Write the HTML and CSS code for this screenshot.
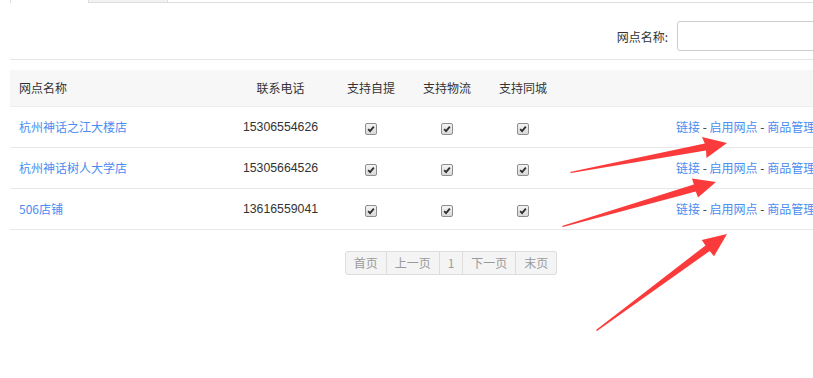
FILE: index.html
```html
<!DOCTYPE html>
<html lang="zh-CN">
<head>
<meta charset="utf-8">
<title>网点管理</title>
<link rel="stylesheet" href="styles.css">
</head>
<body>
<div class="page">
  <div class="tabs">
    <div class="tab tab-active"></div>
    <div class="tab tab-idle"></div>
    <div class="tab-rest"></div>
  </div>
  <div class="search">
    <label class="search-label">网点名称:</label>
    <input class="search-input" type="text">
  </div>
  <div class="grid">
    <div class="row head">
      <div class="cell left">网点名称</div>
      <div class="cell center">联系电话</div>
      <div class="cell center">支持自提</div>
      <div class="cell center">支持物流</div>
      <div class="cell center">支持同城</div>
      <div class="cell"></div>
    </div>
    <div class="row">
      <div class="cell left"><a class="link">杭州神话之江大楼店</a></div>
      <div class="cell center num">15306554626</div>
      <div class="cell center"><span class="cb"><svg viewBox="0 0 12 12"><path d="M2.6 6.2 L4.9 8.6 L9.4 3.2"/></svg></span></div>
      <div class="cell center"><span class="cb"><svg viewBox="0 0 12 12"><path d="M2.6 6.2 L4.9 8.6 L9.4 3.2"/></svg></span></div>
      <div class="cell center"><span class="cb"><svg viewBox="0 0 12 12"><path d="M2.6 6.2 L4.9 8.6 L9.4 3.2"/></svg></span></div>
      <div class="cell actions"><a class="link">链接</a> - <a class="link">启用网点</a> - <a class="link">商品管理</a></div>
    </div>
    <div class="row">
      <div class="cell left"><a class="link">杭州神话树人大学店</a></div>
      <div class="cell center num">15305664526</div>
      <div class="cell center"><span class="cb"><svg viewBox="0 0 12 12"><path d="M2.6 6.2 L4.9 8.6 L9.4 3.2"/></svg></span></div>
      <div class="cell center"><span class="cb"><svg viewBox="0 0 12 12"><path d="M2.6 6.2 L4.9 8.6 L9.4 3.2"/></svg></span></div>
      <div class="cell center"><span class="cb"><svg viewBox="0 0 12 12"><path d="M2.6 6.2 L4.9 8.6 L9.4 3.2"/></svg></span></div>
      <div class="cell actions"><a class="link">链接</a> - <a class="link">启用网点</a> - <a class="link">商品管理</a></div>
    </div>
    <div class="row">
      <div class="cell left"><a class="link">506店铺</a></div>
      <div class="cell center num">13616559041</div>
      <div class="cell center"><span class="cb"><svg viewBox="0 0 12 12"><path d="M2.6 6.2 L4.9 8.6 L9.4 3.2"/></svg></span></div>
      <div class="cell center"><span class="cb"><svg viewBox="0 0 12 12"><path d="M2.6 6.2 L4.9 8.6 L9.4 3.2"/></svg></span></div>
      <div class="cell center"><span class="cb"><svg viewBox="0 0 12 12"><path d="M2.6 6.2 L4.9 8.6 L9.4 3.2"/></svg></span></div>
      <div class="cell actions"><a class="link">链接</a> - <a class="link">启用网点</a> - <a class="link">商品管理</a></div>
    </div>
  </div>
  <div class="pager">
    <span class="pg first">首页</span><span class="pg">上一页</span><span class="pg">1</span><span class="pg">下一页</span><span class="pg last">末页</span>
  </div>
</div>
<svg class="arrows" width="813" height="378" viewBox="0 0 813 378">
  <polygon points="570,172 704.8,143.6 702,137 727,143 706.5,158 706,150.4 571,173"/>
  <polygon points="562,226 693.8,184.6 692,178.4 716,182 698,197.6 695.8,191.4 563,227"/>
  <polygon points="596,330 705.5,245.4 701.7,240.1 727,234 714,256.3 709.7,251 597,331"/>
</svg>
</body>
</html>
```
FILE: styles.css
```css
html, body {
  margin: 0;
  padding: 0;
  overflow: hidden;
  background: #fff;
}
body {
  position: relative;
  width: 813px;
  height: 378px;
  font-family: "Liberation Sans", "Noto Sans CJK SC", sans-serif;
  font-size: 12px;
  color: #333;
}
.page {
  width: 882px;
  margin-left: 10px;
}
.tabs {
  display: flex;
  height: 40px;
  margin-top: -37px;
}
.tab {
  width: 79px;
  box-sizing: border-box;
  border: 1px solid #ddd;
}
.tab-active {
  border-bottom: none;
  background: #fff;
}
.tab-idle {
  border-left: none;
  background: #f2f2f2;
}
.tab-rest {
  flex: 1;
  border-bottom: 1px solid #ddd;
}
.search {
  display: flex;
  justify-content: flex-end;
  align-items: center;
  padding: 18px 0 8px;
  border-bottom: 1px solid #e5e5e5;
}
.search-label {
  margin-right: 9px;
  font-family: "Noto Sans CJK SC", sans-serif;
}
.search-input {
  width: 215px;
  height: 30px;
  box-sizing: border-box;
  border: 1px solid #ccc;
  border-radius: 3px;
  margin: 0;
  padding: 0 6px;
}
.grid {
  margin-top: 10px;
}
.row {
  display: grid;
  grid-template-columns: 218px 105px 76px 76px 76px 1fr;
  height: 40px;
  border-bottom: 1px solid #e8e8e8;
  align-items: center;
}
.row.head {
  height: 36px;
  background: #f7f7f7;
  border-bottom: 1px solid #ededed;
}
.cell {
  white-space: nowrap;
  font-family: "Noto Sans CJK SC", sans-serif;
  line-height: 16px;
}
.left {
  padding-left: 9px;
}
.center {
  text-align: center;
}
.num {
  font-family: "Liberation Sans", "Noto Sans CJK SC", sans-serif;
  font-size: 12.3px;
}
.actions {
  padding-left: 115px;
}
.link {
  color: #4a8cf0;
  text-decoration: none;
}
.cb {
  display: inline-block;
  width: 12px;
  height: 12px;
  box-sizing: border-box;
  border: 1px solid #8e8e8e;
  border-radius: 2px;
  background: linear-gradient(#f4f4f4, #d9d9d9);
  vertical-align: middle;
  position: relative;
}
.cb svg {
  display: block;
  width: 10px;
  height: 10px;
}
.cb path {
  fill: none;
  stroke: #2e2e2e;
  stroke-width: 2.2;
}
.pager {
  display: flex;
  justify-content: center;
  margin-top: 21px;
}
.pg {
  height: 24px;
  line-height: 22px;
  box-sizing: border-box;
  padding: 0 8px;
  border: 1px solid #ddd;
  border-left: none;
  background: #f4f4f4;
  color: #9a9a9a;
  font-family: "Noto Sans CJK SC", sans-serif;
}
.pg.first {
  border-left: 1px solid #ddd;
  border-radius: 3px 0 0 3px;
}
.pg.last {
  border-radius: 0 3px 3px 0;
}
.arrows {
  position: absolute;
  left: 0;
  top: 0;
  pointer-events: none;
}
.arrows polygon {
  fill: #fb3b3b;
}
```
